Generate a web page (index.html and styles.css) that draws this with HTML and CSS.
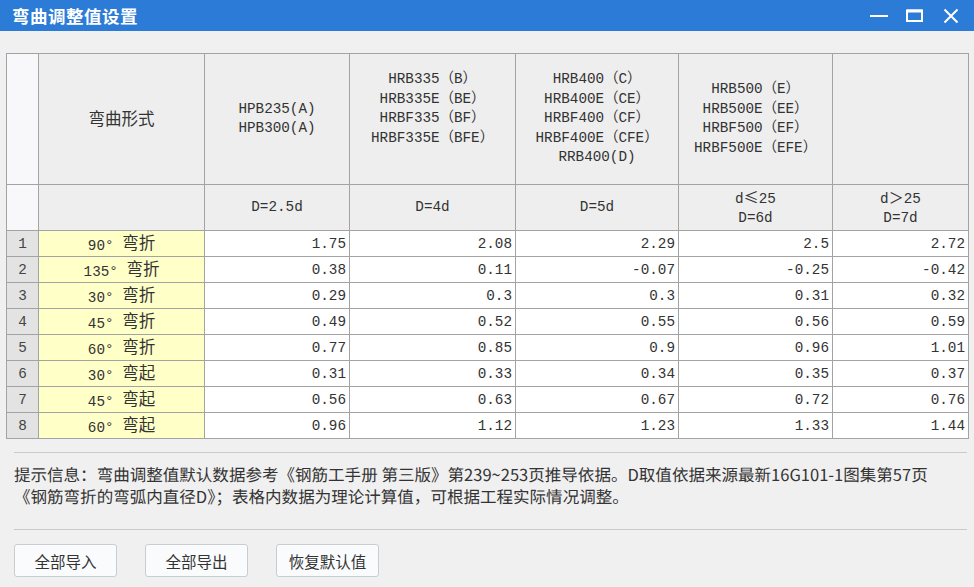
FILE: index.html
```html
<!DOCTYPE html>
<html lang="zh-CN">
<head>
<meta charset="utf-8">
<title>弯曲调整值设置</title>
<link rel="stylesheet" href="styles.css">
</head>
<body>
<div class="window">
  <div class="titlebar">
    <div class="title">弯曲调整值设置</div>
    <div class="controls">
      <div class="ctl"><svg width="20" height="20" viewBox="0 0 20 20"><line x1="1" y1="10" x2="19" y2="10" stroke="#fff" stroke-width="2"/></svg></div>
      <div class="ctl"><svg width="20" height="20" viewBox="0 0 20 20"><rect x="2" y="4.5" width="15" height="10.5" fill="none" stroke="#fff" stroke-width="2"/><line x1="2" y1="5" x2="17" y2="5" stroke="#fff" stroke-width="3"/></svg></div>
      <div class="ctl"><svg width="20" height="20" viewBox="0 0 20 20"><path d="M3.5 3.5 L16.5 16.5 M16.5 3.5 L3.5 16.5" stroke="#fff" stroke-width="2" fill="none"/></svg></div>
    </div>
  </div>

  <div class="content">
    <div class="grid">
      <div class="cell corner"></div>
      <div class="cell head"><div class="zh">弯曲形式</div></div>
      <div class="cell head"><div>HPB235(A)<br>HPB300(A)</div></div>
      <div class="cell head"><div>HRB335（B）<br>HRB335E（BE）<br>HRBF335（BF）<br>HRBF335E（BFE）<br>&nbsp;</div></div>
      <div class="cell head"><div>HRB400（C）<br>HRB400E（CE）<br>HRBF400（CF）<br>HRBF400E（CFE）<br>RRB400(D)</div></div>
      <div class="cell head"><div>HRB500（E）<br>HRB500E（EE）<br>HRBF500（EF）<br>HRBF500E（EFE）</div></div>
      <div class="cell head"></div>

      <div class="cell corner"></div>
      <div class="cell head"></div>
      <div class="cell head"><div>D=2.5d</div></div>
      <div class="cell head"><div>D=4d</div></div>
      <div class="cell head"><div>D=5d</div></div>
      <div class="cell head"><div>d<span class="zh sym">≤</span>25<br>D=6d</div></div>
      <div class="cell head"><div>d<span class="zh sym">＞</span>25<br>D=7d</div></div>

      <div class="cell rn">1</div><div class="cell kind"><span>90°&nbsp;<span class="zh">弯折</span></span></div><div class="cell val">1.75</div><div class="cell val">2.08</div><div class="cell val">2.29</div><div class="cell val">2.5</div><div class="cell val">2.72</div>
      <div class="cell rn">2</div><div class="cell kind"><span>135°&nbsp;<span class="zh">弯折</span></span></div><div class="cell val">0.38</div><div class="cell val">0.11</div><div class="cell val">-0.07</div><div class="cell val">-0.25</div><div class="cell val">-0.42</div>
      <div class="cell rn">3</div><div class="cell kind"><span>30°&nbsp;<span class="zh">弯折</span></span></div><div class="cell val">0.29</div><div class="cell val">0.3</div><div class="cell val">0.3</div><div class="cell val">0.31</div><div class="cell val">0.32</div>
      <div class="cell rn">4</div><div class="cell kind"><span>45°&nbsp;<span class="zh">弯折</span></span></div><div class="cell val">0.49</div><div class="cell val">0.52</div><div class="cell val">0.55</div><div class="cell val">0.56</div><div class="cell val">0.59</div>
      <div class="cell rn">5</div><div class="cell kind"><span>60°&nbsp;<span class="zh">弯折</span></span></div><div class="cell val">0.77</div><div class="cell val">0.85</div><div class="cell val">0.9</div><div class="cell val">0.96</div><div class="cell val">1.01</div>
      <div class="cell rn">6</div><div class="cell kind"><span>30°&nbsp;<span class="zh">弯起</span></span></div><div class="cell val">0.31</div><div class="cell val">0.33</div><div class="cell val">0.34</div><div class="cell val">0.35</div><div class="cell val">0.37</div>
      <div class="cell rn">7</div><div class="cell kind"><span>45°&nbsp;<span class="zh">弯起</span></span></div><div class="cell val">0.56</div><div class="cell val">0.63</div><div class="cell val">0.67</div><div class="cell val">0.72</div><div class="cell val">0.76</div>
      <div class="cell rn">8</div><div class="cell kind"><span>60°&nbsp;<span class="zh">弯起</span></span></div><div class="cell val">0.96</div><div class="cell val">1.12</div><div class="cell val">1.23</div><div class="cell val">1.33</div><div class="cell val">1.44</div>
    </div>

    <div class="footer">
      <div class="sep"></div>
      <div class="info">提示信息：弯曲调整值默认数据参考《钢筋工手册 第三版》第239~253页推导依据。D取值依据来源最新16G101-1图集第57页<br>《钢筋弯折的弯弧内直径D》；表格内数据为理论计算值，可根据工程实际情况调整。</div>
      <div class="sep sep2"></div>
      <div class="buttons">
        <div class="btn">全部导入</div>
        <div class="btn">全部导出</div>
        <div class="btn">恢复默认值</div>
      </div>
    </div>
  </div>
</div>
</body>
</html>
```
FILE: styles.css
```css
html, body {
  margin: 0;
  padding: 0;
}
body {
  width: 974px;
  height: 587px;
  overflow: hidden;
  background: #f0f0f0;
  font-family: "Noto Sans CJK SC", "Noto Sans", sans-serif;
}
.window {
  display: flex;
  flex-direction: column;
  width: 974px;
  height: 587px;
  background: #f0f0f0;
}
.titlebar {
  height: 31px;
  background: #2c7cd7;
  display: flex;
  align-items: center;
  justify-content: space-between;
  flex: none;
}
.title {
  color: #ffffff;
  font-weight: 700;
  font-size: 17.5px;
  padding-left: 12px;
  letter-spacing: 0.5px;
  line-height: 31px;
}
.controls {
  display: flex;
  padding-right: 5px;
  height: 31px;
}
.ctl {
  width: 36px;
  height: 31px;
  display: flex;
  align-items: center;
  justify-content: center;
}
.content {
  display: flex;
  flex-direction: column;
}
.grid {
  margin: 22px 0 0 6px;
  width: 961px;
  display: grid;
  grid-template-columns: 31px 165px 144px 165px 162px 153px 135px;
  grid-template-rows: 130px 45px repeat(8, 25px);
  gap: 1px;
  background: #a3a3a3;
  border: 1px solid #a3a3a3;
  font-family: "Liberation Mono", "Noto Sans CJK SC", monospace;
  font-size: 14.3px;
  color: #333333;
}
.cell {
  background: #ffffff;
  display: flex;
  align-items: center;
  overflow: hidden;
  white-space: nowrap;
}
.zh {
  font-family: "Noto Sans CJK SC", sans-serif;
  font-size: 16.5px;
}
.kind .zh {
  vertical-align: 1px;
}
.sym {
  font-size: 15px;
}
.corner {
  background: #f8f8fa;
}
.head {
  background: #eeeeee;
  justify-content: center;
  text-align: center;
  line-height: 19.5px;
}
.rn {
  background: #e3e3e3;
  justify-content: center;
  color: #444444;
}
.kind {
  background: #ffffc8;
  justify-content: center;
  line-height: 20px;
}
.val {
  justify-content: flex-end;
  padding-right: 3px;
}
.footer {
  display: flex;
  flex-direction: column;
  padding: 0 7px 0 14px;
}
.sep {
  height: 1px;
  background: #cacaca;
  margin-top: 13px;
}
.sep2 {
  margin-top: 22px;
}
.info {
  margin-top: 10px;
  font-size: 16.55px;
  text-rendering: geometricPrecision;
  line-height: 22px;
  color: #333333;
  white-space: nowrap;
}
.buttons {
  display: flex;
  gap: 28px;
  margin-top: 14px;
}
.btn {
  width: 101px;
  height: 31px;
  border: 1px solid #c9ccd1;
  border-radius: 3px;
  background: #fafbfd;
  display: flex;
  align-items: center;
  justify-content: center;
  font-size: 15.5px;
  color: #333333;
}
```
